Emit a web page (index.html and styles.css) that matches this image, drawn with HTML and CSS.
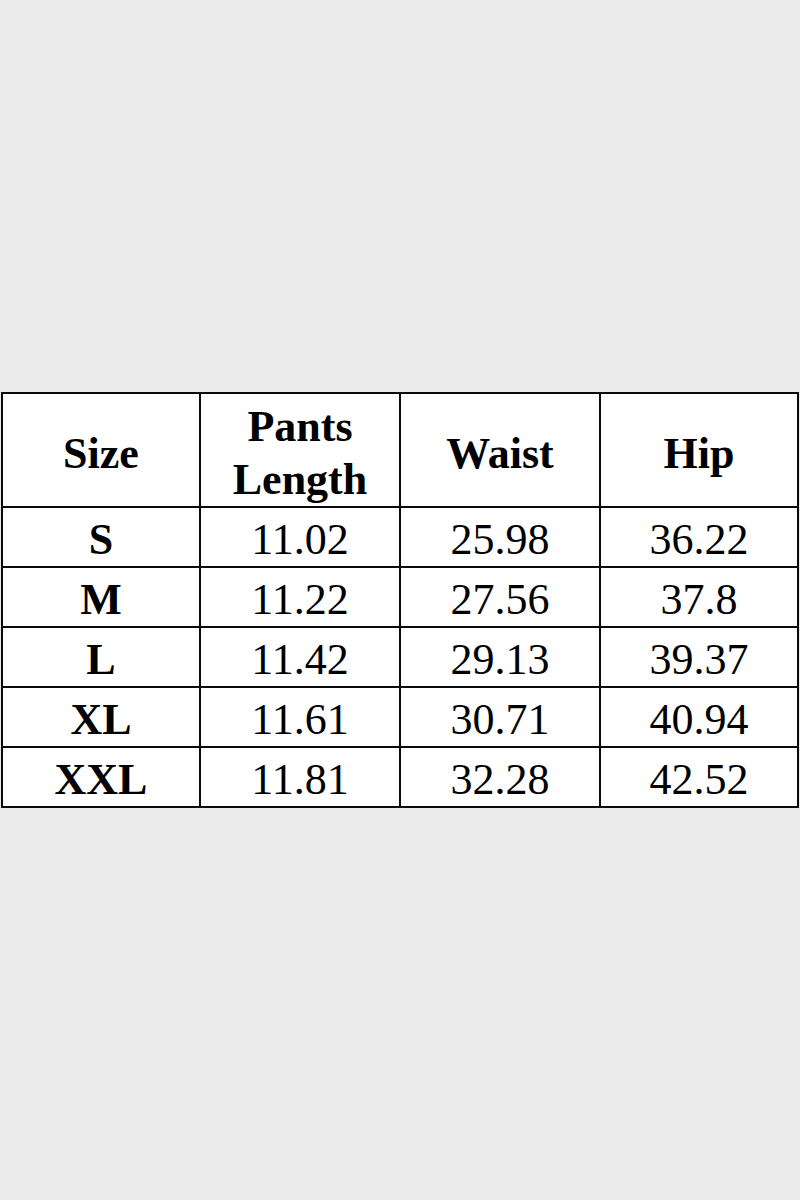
FILE: index.html
```html
<!DOCTYPE html>
<html>
<head>
<meta charset="utf-8">
<link rel="stylesheet" href="styles.css">
</head>
<body>
<div class="page">
  <table class="size-table">
    <tr class="head">
      <th>Size</th>
      <th>Pants<br>Length</th>
      <th>Waist</th>
      <th>Hip</th>
    </tr>
    <tr><th>S</th><td>11.02</td><td>25.98</td><td>36.22</td></tr>
    <tr><th>M</th><td>11.22</td><td>27.56</td><td>37.8</td></tr>
    <tr><th>L</th><td>11.42</td><td>29.13</td><td>39.37</td></tr>
    <tr><th>XL</th><td>11.61</td><td>30.71</td><td>40.94</td></tr>
    <tr><th>XXL</th><td>11.81</td><td>32.28</td><td>42.52</td></tr>
  </table>
</div>
</body>
</html>
```

FILE: styles.css
```css
html, body {
  margin: 0;
  padding: 0;
  background: #ebebeb;
}
.page {
  width: 800px;
  height: 1200px;
  box-sizing: border-box;
  padding: 392px 0 0 1px;
}
.size-table {
  table-layout: fixed;
  width: 798px;
  border-collapse: separate;
  border-spacing: 0;
  border-top: 2px solid #0a0a0a;
  border-left: 2px solid #0a0a0a;
  background: #fff;
  font-family: "Liberation Serif", "Times New Roman", serif;
  font-size: 44px;
  color: #000;
}
.size-table th,
.size-table td {
  box-sizing: border-box;
  width: 200px;
  height: 60px;
  padding: 6px 0 0;
  border-right: 2px solid #0a0a0a;
  border-bottom: 2px solid #0a0a0a;
  text-align: center;
  vertical-align: middle;
  line-height: 50px;
}
.size-table tr > :first-child,
.size-table tr > :last-child {
  width: 198px;
}
.size-table th {
  font-weight: bold;
}
.size-table td {
  font-weight: normal;
}
.size-table .head th {
  height: 114px;
  line-height: 53px;
}
```
